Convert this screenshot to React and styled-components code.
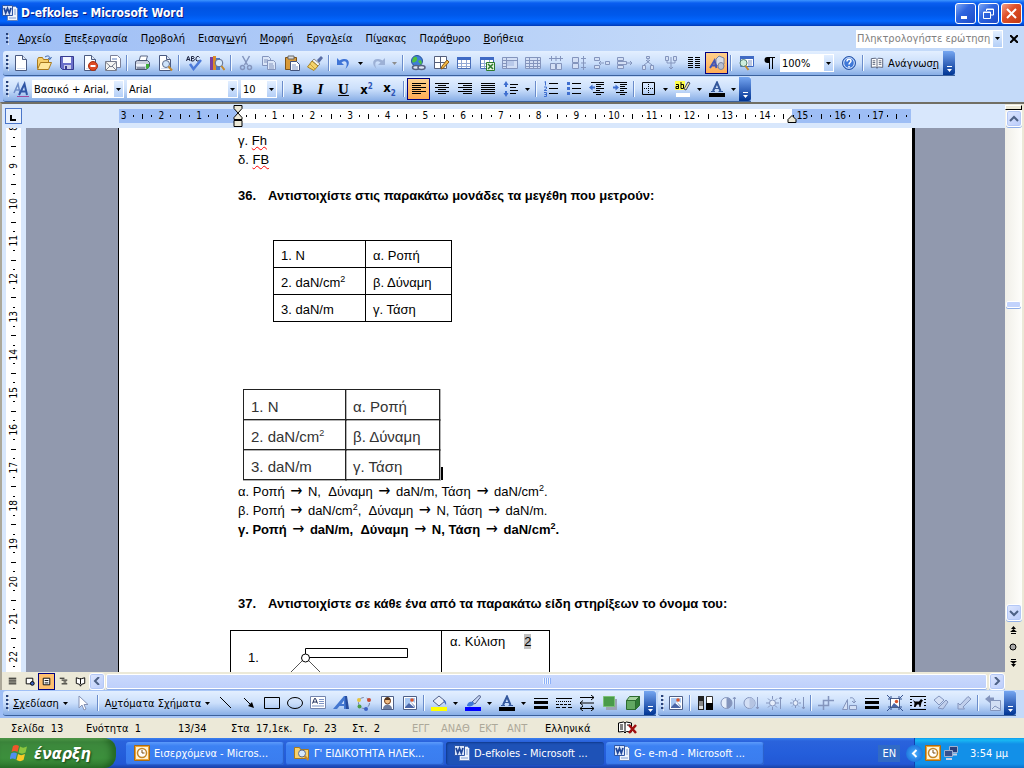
import React from 'react';
import styled, { createGlobalStyle, css } from 'styled-components';

const GlobalStyle = createGlobalStyle`
  * {
    box-sizing: border-box;
  }
  body {
    margin: 0;
    overflow: hidden;
    font-family: 'DejaVu Sans Condensed', 'DejaVu Sans', sans-serif;
    font-size: 11px;
    color: #000;
  }
  button, input, select {
    font: inherit;
    color: inherit;
    border: 0;
    padding: 0;
    margin: 0;
    background: none;
  }
  svg {
    display: block;
    flex: none;
  }
`;

const paper = (
  <>
    <path d="M2.500.5h7l4 4v11h-11z" fill="#fff" stroke="#4a5a80" />
    <path d="M9.500.5v4h4" fill="#dfe7f5" stroke="#4a5a80" />
    <path d="M4 13h8v1H4z" fill="#d5def0" />
  </>
);
const photo = (
  <>
    <path d="M1.500 1.500h13v13h-13z" fill="#fff" stroke="#4d5f87" />
    <path d="M3 3h10v5l-3-2-7 6z" fill="#a9c8f2" />
    <path d="M3 12l4-4 6 5H3z" fill="#4a66a8" />
    <path d="M8 6l5 5v2z" fill="#7f97c8" />
    <circle cx="10" cy="5" r="1.800" fill="#d9542b" />
  </>
);
const wordLogo = (
  <>
    <path d="M5.500 1.500h8l2 2v12h-10z" fill="#eef3fb" stroke="#5f7fbd" />
    <path d="M12 5h2M12 7h2M12 9h2M7 13h7" stroke="#7d9bd0" />
    <path d="M.5.5h10v10H.5z" fill="#dbe6fa" stroke="#2d55a5" />
    <path d="M2 3l1.700 5L5.500 3.500 7.300 8 9 3" fill="none" stroke="#1f4699" strokeWidth="1.800" />
  </>
);
const letterA = (
  <>
    <path d="M4 10L8 1.500 11.500 10" fill="none" stroke="#34589c" strokeWidth="2" />
    <path d="M5 7.500h6M2 10.500h4M9.500 10.500H14" stroke="#34589c" />
  </>
);
const tableGrid = (stroke, top) => (
  <>
    <path d="M1.500 2.500h13v11h-13z" fill="#fff" stroke={stroke} />
    <path d="M1 2h14v3H1z" fill={top} />
    <path d="M1 8.500h14M1 11.500h14M5.500 5v9M10.500 5v9" stroke={stroke} opacity=".6" />
  </>
);
const G = '#8495bd';
const lines = (rows) => <path d={rows} stroke="#000" />;

const icons = {
  word: wordLogo,
  blank: paper,
  open: (
    <>
      <path d="M1.500 13.500v-9l1-2h4l1 2h5v3" fill="#f7cf6b" stroke="#a8791d" />
      <path d="M1.500 14.500l3-7h11l-3 7z" fill="#ffe69a" stroke="#a8791d" />
      <path d="M9 2c3-2 5-1 5 2m-2-1l2 1.500L15.500 2" fill="none" stroke="#3e67b0" />
    </>
  ),
  save: (
    <>
      <path d="M1.500 1.500h13v13h-11l-2-2z" fill="#6a6fc9" stroke="#363a8f" />
      <path d="M4 2h8v6H4z" fill="#f4f6ff" />
      <path d="M5 10h7v4H5z" fill="#c8cbe8" />
      <path d="M6 11h2v3H6z" fill="#363a8f" />
    </>
  ),
  permission: (
    <>
      {paper}
      <circle cx="11" cy="11" r="4.500" fill="#de4b25" stroke="#a52f10" />
      <path d="M8.500 11h5" stroke="#fff" strokeWidth="2" />
    </>
  ),
  mail: (
    <>
      <path d="M5.500.5h7l3 3v9h-10z" fill="#fff" stroke="#7b8199" />
      <path d="M.5 6.500h11v9H.5z" fill="#f5f5f2" stroke="#777c8c" />
      <path d="M.5 7l5.500 5 5.500-5M1 15l4-4m6 4l-4-4" fill="none" stroke="#777c8c" />
      <path d="M7 4h5" stroke="#5f7fbd" />
    </>
  ),
  print: (
    <>
      <path d="M5 6l1.500-5h7L12 6" fill="#fff" stroke="#5c6885" />
      <path d="M1.500 6.500l2-1h10l2 2v4l-3 3h-11z" fill="#c9cfde" stroke="#4b5672" />
      <path d="M2 9h10v2H2z" fill="#eef1f8" />
      <path d="M12 9h3v4l-3 1z" fill="#3fae38" />
      <path d="M3 13h8" stroke="#4b5672" />
    </>
  ),
  preview: (
    <>
      {paper}
      <circle cx="9" cy="9" r="3.500" fill="#cfe4fb" stroke="#5f6d8c" />
      <path d="M11.500 11.500l3.500 4" stroke="#c58a2c" strokeWidth="2" />
    </>
  ),
  spelling: (
    <>
      <path d="M.5 6L2 1.500h.5L4 6M1 4.500h2.500M5.500 6V1.500h2l.5 1-.5 1h-2m2 0l1 1-1 1.500h-2M13.500 2.500l-1-1H11L10 3v2l1 1h1.500l1-1" fill="none" stroke="#1c2340" />
      <path d="M4 9l3.500 5L15 5" fill="none" stroke="#4c7ad9" strokeWidth="2.500" />
    </>
  ),
  research: (
    <>
      <path d="M1 2h3v13H1z" fill="#7b3fa0" />
      <path d="M4 1h3v14H4z" fill="#d98e2b" />
      <path d="M7 3h4v12H7z" fill="#4a7ac9" />
      <circle cx="10" cy="8" r="3.800" fill="#d6e9fb" stroke="#5f6d8c" />
      <path d="M12.500 11l3 4" stroke="#c58a2c" strokeWidth="2" />
    </>
  ),
  cut: (
    <>
      <path d="M4.500 1l5 9M11.500 1l-5 9" stroke={G} strokeWidth="1.500" />
      <circle cx="4.500" cy="12.500" r="2" fill="none" stroke={G} strokeWidth="1.500" />
      <circle cx="11.500" cy="12.500" r="2" fill="none" stroke={G} strokeWidth="1.500" />
    </>
  ),
  copy: (
    <>
      <path d="M1.500 1.500h6l2 2v7h-8z" fill="#dbe6f8" stroke={G} />
      <path d="M6.500 5.500h6l2 2v7h-8z" fill="#dbe6f8" stroke={G} />
      <path d="M3 5h4M3 7h3M8 9h4M8 11h5M8 13h5" stroke={G} />
    </>
  ),
  paste: (
    <>
      <path d="M1.500 2.500h11v12h-11z" fill="#d99a38" stroke="#7d531a" />
      <path d="M4 1h6v3H4z" fill="#dcdcdc" stroke="#666" />
      <path d="M6.500 6.500h6l3 3v6h-9z" fill="#fff" stroke="#42527a" />
      <path d="M8 10h4M8 12h6M8 14h6" stroke="#7d93c4" />
    </>
  ),
  brush: (
    <>
      <path d="M10 5l4-4 2 2-4 5z" fill="#5a6ea5" />
      <path d="M7 4l6 5-2 2-6-5z" fill="#f1f1f1" stroke="#888" />
      <path d="M5 6l6 5-4 4.500L.5 12z" fill="#f5d36a" stroke="#a78325" />
      <path d="M3 9l5 5" stroke="#c9a13a" />
    </>
  ),
  undo: <path d="M1 3v7h7L5.500 7.500c4-3 7 0 4 6.500 7-7 2-13-6-8.500z" fill="#3f74d6" />,
  redo: <path d="M15 3v7H8l2.500-2.500c-4-3-7 0-4 6.500-7-7-2-13 6-8.500z" fill="#9db1d6" />,
  link: (
    <>
      <circle cx="7" cy="6" r="5.500" fill="#3f7fd6" stroke="#27539c" />
      <path d="M3 3c3-3 5 0 4 2S4 8 2 7zM8 6c3-2 5 0 3 4z" fill="#4fc23c" />
      <ellipse cx="6" cy="12.500" rx="3.500" ry="2" fill="#dfe6f5" stroke="#566282" strokeWidth="1.500" />
      <ellipse cx="11.500" cy="12.500" rx="3.500" ry="2" fill="#dfe6f5" stroke="#566282" strokeWidth="1.500" />
    </>
  ),
  drawTable: (
    <>
      <path d="M1.500 1.500h12v12h-12z" fill="#fff" stroke="#555f7c" />
      <path d="M1 7.500h13M7.500 1v13" stroke="#555f7c" />
      <path d="M8 14l1-3 5-6 2 2-5.500 6z" fill="#f0b643" stroke="#8c5a17" />
    </>
  ),
  table: tableGrid('#4a6fb8', '#3f6ac4'),
  excel: (
    <>
      {tableGrid('#4a6fb8', '#3f6ac4')}
      <path d="M7.500 7.500h8v8h-8z" fill="#e4f2df" stroke="#2d7a2d" />
      <path d="M9 9l5 5m0-5l-5 5" stroke="#2d7a2d" strokeWidth="1.500" />
    </>
  ),
  merge: (
    <>
      <path d="M.5 2.500h15v11H.5z" fill="#d3dff5" stroke={G} />
      <path d="M1 5.500h14M4.500 3v11M1 8.500h3M1 11.500h3" stroke={G} />
      <path d="M5 6h7v5H5z" fill="#b9c9e9" />
    </>
  ),
  split: (
    <>
      <path d="M.5 2.500h15v11H.5z" fill="#d3dff5" stroke={G} />
      <path d="M1 5.500h14M4.500 3v11M8.500 5v9M12.500 3v11M1 8.500h14M1 11.500h14" stroke={G} />
    </>
  ),
  spreadCols: (
    <>
      <path d="M1 3.500h14M3.500 1v5M12.500 1v5M8 1v5" stroke={G} />
      <path d="M2.500 8.500h5v6h-5zM8.500 8.500h5v6h-5z" fill="#d3dff5" stroke={G} />
    </>
  ),
  spreadRows: (
    <>
      <path d="M12.500 1v14M10 3.500h5M10 12.500h5M10 8h5" stroke={G} />
      <path d="M1.500 2.500h6v5h-6zM1.500 8.500h6v5h-6z" fill="#d3dff5" stroke={G} />
    </>
  ),
  insertCell: (
    <>
      <path d="M.5 2.500h5v3h-5zM.5 10.500h5v3h-5zM11.500 6.500h4v3h-4z" fill="#d3dff5" stroke={G} />
      <path d="M5 8h5M7 6L5 8l2 2" fill="none" stroke={G} />
    </>
  ),
  insertRow: (
    <>
      <path d="M.5 2.500h6v3h-6zM.5 10.500h6v3h-6zM.5 6.500h9v3h-9z" fill="#d3dff5" stroke={G} />
      <path d="M10 8h5M13 6l2 2-2 2" fill="none" stroke={G} />
    </>
  ),
  dropCell: (
    <>
      <path d="M2.500 10.500h3v4h-3zM10.500 10.500h3v4h-3z" fill="#d3dff5" stroke={G} />
      <path d="M8 1v6M6 5l2 2 2-2M4 10l4-3 4 3" fill="none" stroke={G} />
      <path d="M6.500 1.500h3v2h-3z" fill="#d3dff5" stroke={G} />
    </>
  ),
  dropCol: (
    <>
      <path d="M2.500 1.500h3v4h-3zM10.500 1.500h3v4h-3z" fill="#d3dff5" stroke={G} />
      <path d="M8 2v12M6 12l2 2 2-2M4 6v2h8V6" fill="none" stroke={G} />
    </>
  ),
  columns: lines('M2 2.500h5M9 2.500h5M2 4.500h5M9 4.500h5M2 6.500h5M9 6.500h5M2 8.500h5M9 8.500h5M2 10.500h5M9 10.500h5M2 12.500h5M9 12.500h5'),
  drawing: (
    <>
      <path d="M7 4l3-3 5 2v6l-3 3-5-2z" fill="#d8dce6" stroke="#7a849e" />
      <ellipse cx="12" cy="11" rx="3" ry="3.500" fill="#b8bfd0" stroke="#7a849e" />
      <path d="M1 13L5.500 5.500 7.500 13M3 10.500h5" fill="none" stroke="#4355b5" strokeWidth="2" />
    </>
  ),
  docMap: (
    <>
      <path d="M2.500 1.500h13v10h-13z" fill="#fff" stroke="#3f6ac4" />
      <path d="M2 1h14v3H2z" fill="#3f6ac4" />
      <path d="M10 6h4M10 8h4M10 10h4" stroke="#7d93c4" />
      <circle cx="5.500" cy="8" r="3.500" fill="#cfeedd" stroke="#53806f" />
      <path d="M7.500 11l3 4" stroke="#c58a2c" strokeWidth="2" />
    </>
  ),
  pilcrow: (
    <>
      <path d="M8 2H6.500a3 3 0 000 6H8z" />
      <path d="M8.500 2v12M11.500 2v12M7 2.500h7" stroke="#000" />
    </>
  ),
  help: (
    <>
      <circle cx="8" cy="8" r="6.500" fill="#3f78d8" stroke="#2a56a8" />
      <circle cx="8" cy="8" r="5.300" fill="none" stroke="#dbe8fc" />
      <path d="M6 6.500c0-3 4-3 4-.5C10 7.500 8 7.500 8 9.500M8 11v1.500" fill="none" stroke="#fff" strokeWidth="1.500" />
    </>
  ),
  book: (
    <>
      <path d="M1.500 3l5-.5L8 4l1.500-1.500 5 .5v10l-5-.5L8 14l-1.500-1.500-5 .5z" fill="#fff" stroke="#4d566f" />
      <path d="M8 4v10M3 5.500h3M3 7.500h3M3 9.500h3M10 5.500h3M10 7.500h3M10 9.500h3" stroke="#4d566f" />
    </>
  ),
  styles: (
    <>
      <path d="M1 12L5 3l2 9M2.500 9H7" fill="none" stroke="#6f8ec9" strokeWidth="1.500" />
      <path d="M6 14L11.500 3 14 14M8 10.500h5" fill="none" stroke="#2f55a5" strokeWidth="2" />
      <path d="M4 15.500h12" stroke="#a04a9a" />
    </>
  ),
  left: lines('M1 2.500h14M1 4.500h9M1 6.500h14M1 8.500h9M1 10.500h14M1 12.500h9'),
  center: lines('M1 2.500h14M4 4.500h8M1 6.500h14M4 8.500h8M1 10.500h14M4 12.500h8'),
  right: lines('M1 2.500h14M6 4.500h9M1 6.500h14M6 8.500h9M1 10.500h14M6 12.500h9'),
  justify: lines('M1 2.500h14M1 4.500h14M1 6.500h14M1 8.500h14M1 10.500h14M1 12.500h14'),
  spacing: (
    <>
      {lines('M7 3.500h8M7 6.500h6M7 9.500h8M7 12.500h6')}
      <path d="M3 0L.5 4h5zM3 16L.5 12h5zM2 4h2v2H2zM2 10h2v2H2z" fill="#3f6fd0" />
    </>
  ),
  numbers: (
    <>
      {lines('M6 2.500h9M6 7.500h9M6 12.500h9')}
      <path d="M1.500 1l1-.500v4M1 6h2.500v1.500L1 9.500h3M1 11.500h2.500v4H1M1.500 13.500h2" fill="none" stroke="#3f6fd0" />
    </>
  ),
  bullets: (
    <>
      {lines('M6 2.500h9M6 7.500h9M6 12.500h9')}
      <path d="M1 1h3v3H1zM1 6h3v3H1zM1 11h3v3H1z" fill="#3f6fd0" />
    </>
  ),
  outdent: (
    <>
      {lines('M2 1.500h13M7 3.500h8M7 5.500h5M7 7.500h8M7 9.500h4M4 11.500h11M7 13.500h5')}
      <path d="M0 6.500l3.500-3v2H6v2H3.500v2z" fill="#3f6fd0" />
    </>
  ),
  indent: (
    <>
      {lines('M2 1.500h13M8 3.500h7M8 5.500h5M8 7.500h7M8 9.500h4M4 11.500h11M8 13.500h5')}
      <path d="M7 6.500l-3.500-3v2H1v2h2.500v2z" fill="#3f6fd0" />
    </>
  ),
  border: (
    <>
      <path d="M1.500 1.500h12v12h-12z" fill="none" stroke="#000" />
      <path d="M7.500 3v10M3 7.500h10" stroke="#000" strokeDasharray="1 1" />
    </>
  ),
  highlight: (
    <>
      <path d="M0 0h10v9H0z" fill="#ffff4a" />
      <path d="M1 3.500h2.500v4H1V5.500h2.500M6 1v6.500h2.500v-4H6" fill="none" stroke="#000" />
      <path d="M9 8l4-7 2 1-4 7z" fill="#f3e9a8" stroke="#404a66" />
      <path d="M1 12h14v4H1z" fill="#fff" />
    </>
  ),
  fontColor: (
    <>
      {letterA}
      <path d="M0 12h16v4H0z" />
    </>
  ),
  pointer: <path d="M4 1v12l3-3 2 5 2-1-2-4.500h4z" fill="#fff" stroke="#8592b5" />,
  line: <path d="M2 2l11 11" stroke="#000" />,
  arrow: (
    <>
      <path d="M3 3l8 8" stroke="#000" />
      <path d="M13 13l-6-2 4-4z" />
    </>
  ),
  rect: <path d="M.5 2.500h15v11H.5z" fill="none" stroke="#000" />,
  oval: <ellipse cx="8" cy="8" rx="7.500" ry="5.500" fill="none" stroke="#000" />,
  textBox: (
    <>
      <path d="M.5 1.500h15v12H.5z" fill="#fff" stroke="#7384ac" />
      <path d="M2.500 8.500l2-5h1l2 5M3 7h4" fill="none" stroke="#1c2a55" />
      <path d="M9 4.500h5M9 6.500h5M9 8.500h5M2 11h12" stroke="#7d93c4" />
    </>
  ),
  wordArt: (
    <>
      <path d="M11 1h3l2 13h-4z" fill="#274d9f" />
      <path d="M11 1L0 14h4l2.500-3H11v3h2l-1-13zM8.500 9L11 5.500V9z" fill="#4377d0" />
    </>
  ),
  diagram: (
    <>
      <circle cx="8" cy="8" r="5.500" fill="none" stroke="#7884a4" strokeDasharray="4 3" />
      <circle cx="3" cy="5" r="2" fill="#e7c440" />
      <circle cx="13" cy="5" r="2" fill="#c84b33" />
      <circle cx="3.500" cy="11.500" r="2" fill="#4c9e45" />
      <circle cx="10" cy="14" r="2" fill="#3d63c5" />
    </>
  ),
  clipArt: (
    <>
      <path d="M2.500 1.500h12v13h-12z" fill="#fff" stroke="#4d5f87" />
      <path d="M4 14c0-6 9-6 9 0z" fill="#6d7da0" />
      <circle cx="8.500" cy="6" r="3" fill="#f1bd84" stroke="#77411c" />
      <path d="M5.500 5c0-4 6-4 6 0z" fill="#55351d" />
    </>
  ),
  photo,
  fill: (
    <>
      <path d="M2 6l6-5 6 5-6 5z" fill="#e9eef8" stroke="#50608a" />
      <path d="M12 5c3 0 3.500 3 3 5l-2-3z" fill="#4169c2" />
      <path d="M0 12h16v4H0z" fill="#ff0" />
    </>
  ),
  lineColor: (
    <>
      <path d="M7 7l7-6.500 2 1L10 9z" fill="#c9d8f5" stroke="#50608a" />
      <path d="M2 11c0-4 4-5 6-4l1 2c-1 2-4 3-7 2z" fill="#3f78d8" />
      <path d="M0 12h16v4H0z" fill="#00f" />
    </>
  ),
  lineStyle: (
    <>
      <path d="M1 3h14v1H1zM1 6h14v3H1zM1 11h14v3H1z" />
    </>
  ),
  dashStyle: (
    <>
      <path d="M0 3.500h16" stroke="#000" />
      <path d="M0 6.500h16" stroke="#000" strokeDasharray="1 1" />
      <path d="M0 9.500h16" stroke="#000" strokeDasharray="3 1" />
      <path d="M0 12.500h16" stroke="#000" strokeDasharray="4 2" />
    </>
  ),
  arrowStyle: (
    <path d="M1 2.500h14M12 0l3 2.500L12 5M1 8h14M4 5.500L1 8l3 2.500M1 13.500h14M4 11l-3 2.500L4 16M12 11l3 2.500-3 2.500" fill="none" stroke="#000" />
  ),
  shadow: (
    <>
      <path d="M4 4h11v11H4z" fill="#9ba4b5" />
      <path d="M1.500 1.500h11v10h-11z" fill="#4a9b4a" stroke="#7bbf78" />
    </>
  ),
  cube: (
    <>
      <path d="M1.500 5.500h9v9h-9z" fill="#62a862" stroke="#2c6b30" />
      <path d="M1.500 5.500l3-4h10l-4 4z" fill="#a5d3a0" stroke="#2c6b30" />
      <path d="M10.500 5.500l4-4v9l-4 4z" fill="#2f7a36" stroke="#2c6b30" />
    </>
  ),
  colorMode: (
    <>
      <path d="M1 1h6v14H1z" fill="#222" />
      <path d="M2 11h4v3H2z" fill="#ddd" />
      <path d="M2 6h4v5H2z" fill="#888" />
      <path d="M9.500 1.500h6v13h-6z" fill="#fff" stroke="#333" />
      <path d="M9 8h7v7H9z" />
    </>
  ),
  contrastUp: (
    <>
      <circle cx="6.500" cy="8" r="5.500" fill="#e6eefb" stroke={G} />
      <path d="M6.500 2.500a5.500 5.500 0 010 11z" fill={G} />
      <path d="M14.500 14V2M13 4l1.500-2L16 4" fill="none" stroke={G} />
    </>
  ),
  contrastDown: (
    <>
      <circle cx="6.500" cy="8" r="5.500" fill="#d3dff5" stroke={G} />
      <path d="M6.500 2.500a5.500 5.500 0 010 11z" fill="#b5c4e2" />
      <path d="M14.500 2v12M13 12l1.500 2 1.500-2" fill="none" stroke={G} />
    </>
  ),
  brightUp: (
    <>
      <circle cx="6.500" cy="8" r="3" fill="#e6eefb" stroke={G} />
      <path d="M6.500 1v3M6.500 12v3M0 8h3M10 8h3M2 3.500l2 2M9 10.500l2 2M11 3.500l-2 2M2 12.500l2-2M14.500 14V2M13 4l1.500-2L16 4" fill="none" stroke={G} />
    </>
  ),
  brightDown: (
    <>
      <circle cx="6.500" cy="8" r="2.500" fill="#e6eefb" stroke={G} />
      <path d="M6.500 3v2M6.500 11v2M1 8h2M10 8h2M3 4.500l1 1M9 10.500l1 1M10 4.500l-1 1M3 11.500l1-1M14.500 2v12M13 12l1.500 2 1.500-2" fill="none" stroke={G} />
    </>
  ),
  crop: (
    <path d="M0 10.500h10.500V5M5.500 15V5.500H16M10.500 5V1" fill="none" stroke={G} strokeWidth="1.500" />
  ),
  rotate: (
    <>
      <path d="M1.500 14.500l5-10v10zM8.500 14.500v-4h7v4z" fill="#d3dff5" stroke={G} />
      <path d="M9 3c3-1 5 1 4 4m-2-1l2 2 2-2" fill="none" stroke={G} />
    </>
  ),
  compress: (
    <>
      <path d="M3.500 3.500h9v9h-9z" fill="#fff" stroke="#4d5f87" />
      <path d="M4 12l3-4 5 4z" fill="#4a66a8" />
      <circle cx="9.500" cy="6.500" r="1.700" fill="#d9542b" />
      <path d="M0 0l4 4M16 0l-4 4M0 16l4-4M16 16l-4-4M1 4h3V1M15 4h-3V1M1 12h3v3M15 12h-3v3" fill="none" stroke="#35528f" />
    </>
  ),
  wrap: (
    <>
      <path d="M0 1.500h16M0 4.500h16M0 7.500h16M0 10.500h16M0 14.500h16" stroke="#000" />
      <path d="M2 3h12v10H2z" fill="#cfe0fb" />
      <path d="M3 5l2 1.500h4L11 4l2 1.500-1.500 2-1 4.500H9.500L9 9.500H7L5.500 12H4l.5-4z" />
    </>
  ),
  formatFill: (
    <>
      <path d="M1 5l5-4 5 4-5 5z" fill="#d3dff5" stroke={G} />
      <path d="M5 13l8-8 2 2-5 7z" fill="#c0cfec" stroke={G} />
    </>
  ),
  transparent: <path d="M2 14v-6l2 2 8-8.500 3 2.500-8 8 1.500 2z" fill="#c0cfec" stroke={G} />,
  reset: (
    <>
      <path d="M5.500 5.500h10v10h-10z" fill="#d3dff5" stroke={G} />
      <path d="M7 14l3-3 5 3" fill="none" stroke={G} />
      <path d="M0 4l5-4v2.500h4V6H5v2z" fill={G} />
    </>
  ),
  clock: (
    <>
      <path d="M.5.5h15v15H.5z" fill="#f0a534" stroke="#a86a12" />
      <path d="M2 2h12v12H2z" fill="#fff3d4" />
      <circle cx="8" cy="8" r="4.500" fill="#fff" stroke="#c2862a" strokeWidth="1.500" />
      <path d="M8 5v3h2.500" fill="none" stroke="#7b4c10" />
    </>
  ),
  folderFind: (
    <>
      <path d="M.5 2.500h5l1 2h8v9H.5z" fill="#f8d26b" stroke="#a8791d" />
      <circle cx="8" cy="8.500" r="3.500" fill="#d6e9fb" stroke="#5f6d8c" />
      <path d="M10.500 11l4 4" stroke="#c58a2c" strokeWidth="2" />
    </>
  ),
  network: (
    <>
      <path d="M6.500 1.500h8v6h-8z" fill="#2b3f7c" stroke="#9fb0d0" />
      <path d="M9 9.500h5" stroke="#c5d0e6" strokeWidth="2" />
      <path d="M1.500 5.500h8v6h-8z" fill="#35508f" stroke="#9fb0d0" />
      <path d="M3 14h6" stroke="#c5d0e6" strokeWidth="2" />
    </>
  ),
  viewNormal: lines('M4 4.500h8M4 6.500h8M4 8.500h8M4 10.500h8'),
  viewWeb: (
    <>
      <path d="M4.500 4.500h7v6h-7z" fill="#fff" stroke="#000" />
      <circle cx="11" cy="10" r="2" fill="#3d63c5" stroke="#000" />
    </>
  ),
  viewPrint: (
    <>
      <path d="M4.500 4.500h7v7h-7z" fill="#fff" stroke="#000" />
      <path d="M6 7h4M6 9.500h4" stroke="#000" />
    </>
  ),
  viewOutline: lines('M4 4.500h5M6 6.500h6M8 8.500h3M6 10.500h6'),
  viewRead: (
    <>
      <path d="M3.500 4l3.500 1h2l3.500-1v6L9 11l-1 2-1-2-3.500-1z" fill="#fff" stroke="#000" />
      <path d="M8 5v6" stroke="#000" />
    </>
  ),
};

const Icon = ({ name, size = 16 }) => (
  <svg width={size} height={size} viewBox="0 0 16 16" aria-hidden="true">
    {icons[name]}
  </svg>
);

const Caret = ({ color = '#000' }) => (
  <svg width="5" height="3" viewBox="0 0 5 3" aria-hidden="true">
    <path d="M0 0h5L2.500 3z" fill={color} />
  </svg>
);

const chevrons = {
  up: 'M1 6l4-4 4 4',
  down: 'M1 2l4 4 4-4',
  left: 'M7 0L3 4l4 4',
  right: 'M3 0l4 4-4 4',
};
const Chevron = ({ dir }) => (
  <svg width="10" height="8" viewBox="0 0 10 8" aria-hidden="true">
    <path d={chevrons[dir]} fill="none" stroke="#4d6185" strokeWidth="2" />
  </svg>
);

const Window = styled.div`
  height: 100vh;
  display: flex;
  flex-direction: column;
  background: #c4daf9;
`;

const TitleBar = styled.header`
  height: 26px;
  flex: none;
  display: flex;
  align-items: center;
  gap: 3px;
  padding: 0 2px;
  background: linear-gradient(#3d95ff 0, #0a5ef0 3px, #0054e3 8px, #0059ec 15px, #0266ff 21px, #0050dd 24px, #0038b4 26px);
`;

const Title = styled.h1`
  flex: 1;
  margin: 0;
  font: bold 12px 'DejaVu Sans Condensed', sans-serif;
  color: #fff;
  text-shadow: 1px 1px 0 #0a1883;
`;

const CaptionButton = styled.button`
  width: 21px;
  height: 21px;
  display: flex;
  align-items: center;
  justify-content: center;
  border: 1px solid #fff;
  border-radius: 3px;
  background: ${({ $close }) =>
    $close
      ? 'linear-gradient(135deg, #f0a08a, #e0502a 40%, #c23a12)'
      : 'linear-gradient(135deg, #7ea8f5, #2f66e0 40%, #1c4bc8)'};
  margin-left: -1px;
`;

const MenuBar = styled.nav`
  height: 25px;
  flex: none;
  display: flex;
  align-items: center;
  padding: 0 4px 0 6px;
  background: linear-gradient(90deg, #9ebef5, #c4daf9 70%);
`;

const Menus = styled.div`
  display: flex;
  gap: 13px;
  padding-left: 9px;
`;

const MenuButton = styled.button`
  height: 20px;
  white-space: nowrap;
`;

const Handle = styled.span`
  flex: none;
  width: 3px;
  height: ${({ $short }) => ($short ? 12 : 16)}px;
  background: repeating-linear-gradient(#27417a 0 2px, transparent 2px 4px);
  border-right: 1px solid rgba(255, 255, 255, 0.6);
`;

const Ask = styled.div`
  display: flex;
  height: 18px;
  margin-left: auto;
  background: #fff;

  input {
    width: 136px;
    padding: 0 0 0 1px;
    outline: 0;
    &::placeholder {
      color: #808080;
      opacity: 1;
    }
  }
`;

const DropArrow = styled.button`
  width: 11px;
  height: 100%;
  display: flex;
  align-items: center;
  justify-content: center;
  ${({ $filled }) =>
    $filled &&
    css`
      background: linear-gradient(#e3efff, #b4cff7);
      border: 1px solid #fff;
    `}
`;

const CloseDoc = styled.button`
  width: 12px;
  height: 16px;
  display: flex;
  align-items: center;
  justify-content: center;
  margin-left: 5px;
`;

const Dock = styled.div`
  flex: none;
  display: flex;
  align-items: flex-start;
  gap: 2px;
  padding: ${({ $pad }) => $pad || '0'};
  padding-left: 3px;
  background: linear-gradient(90deg, #9ebef5, #c4daf9 70%);
`;

const Bar = styled.div`
  height: 25px;
  display: flex;
  align-items: center;
  padding-left: 3px;
  border-bottom: 1px solid #3b619c;
  border-radius: 3px 0 0 3px;
  background: linear-gradient(#e3efff, #cbdffb 50%, #88aee6);
`;

const BarEnd = styled.button`
  align-self: stretch;
  width: 12px;
  display: flex;
  align-items: flex-end;
  justify-content: center;
  padding-bottom: 2px;
  border-radius: 0 3px 3px 0;
  background: linear-gradient(#75a6f1, #3a6ac0 50%, #003594);
`;

const Tool = styled.button`
  flex: none;
  width: 23px;
  height: 22px;
  display: flex;
  align-items: center;
  justify-content: center;
  ${({ $active }) =>
    $active &&
    css`
      border: 1px solid #000080;
      background: linear-gradient(#ffd08c, #ffac55);
    `}
`;

const FaceTool = styled(Tool)`
  font: bold 15px 'Liberation Serif', serif;
  font-style: ${({ $italic }) => ($italic ? 'italic' : 'normal')};
  text-decoration: ${({ $underline }) => ($underline ? 'underline' : 'none')};
`;

const ScriptTool = styled(Tool)`
  font: bold 13px 'DejaVu Sans Condensed', sans-serif;

  sup, sub {
    font-size: 8px;
    line-height: 8px;
    color: #2f55b5;
  }
`;

const TextTool = styled.button`
  flex: none;
  height: 22px;
  display: flex;
  align-items: center;
  gap: 4px;
  padding: 0 4px;
  white-space: nowrap;
`;

const Separator = styled.span`
  flex: none;
  width: 2px;
  height: 16px;
  margin: 0 2px;
  border-left: 1px solid #6a8ccb;
  border-right: 1px solid #f1f9ff;
`;

const ComboBox = styled.span`
  flex: none;
  display: flex;
  width: ${({ $width }) => $width}px;
  height: 18px;
  margin-right: 3px;
  background: #fff;

  select {
    flex: 1;
    min-width: 0;
    appearance: none;
    padding-left: 2px;
    outline: 0;
  }
`;

const WorkArea = styled.main`
  flex: 1;
  min-height: 0;
  display: flex;
  background: #d8e7fc;
  border-top: 2px solid #716f64;
  border-left: 2px solid #aca899;
`;

const Sheet = styled.section`
  flex: 1;
  min-width: 0;
  display: flex;
  flex-direction: column;
`;

const RulerRow = styled.div`
  flex: none;
  height: 24px;
  display: flex;
  align-items: center;
`;

const TabButton = styled.button`
  width: 17px;
  height: 16px;
  margin: 0 97px 0 3px;
  padding: 3px 0 0 4px;
  border: 1px solid #4a76c9;
  background: #e8f1fd;
`;

const Ruler = styled.div`
  position: relative;
  flex: 1;
  height: 14px;
  margin-right: 94px;
  display: grid;
  grid-template-columns: repeat(84, 1fr);
  align-items: center;
  justify-items: center;
  font-size: 10px;
  line-height: 12px;
  background: linear-gradient(90deg, #9ebef5 15%, #fff 15% 85%, #9ebef5 85%);

  span {
    width: 0;
    display: flex;
    justify-content: center;
  }
`;

const Tick = styled.i`
  flex: none;
  width: ${({ $wide }) => $wide || 1}px;
  height: ${({ $tall }) => $tall || 2}px;
  background: #000;
`;

const Marker = styled.svg`
  position: absolute;
  left: ${({ $at }) => $at};
  top: ${({ $top }) => $top}px;
  margin-left: -5px;
`;

const Canvas = styled.div`
  flex: 1;
  min-height: 0;
  display: flex;
  background: #9199ae;
`;

const SideRuler = styled.div`
  flex: none;
  width: 24px;
  overflow: hidden;
  border: solid #d8e7fc;
  border-width: 0 5px 0 4px;
  background: #fff;
`;

const SideTicks = styled.div`
  height: 567px;
  margin-top: -5px;
  display: grid;
  grid-template-rows: repeat(60, 1fr);
  align-items: center;
  justify-items: center;
  font-size: 10px;
  line-height: 12px;

  span {
    height: 0;
    display: flex;
    align-items: center;
  }
  b {
    font-weight: normal;
    writing-mode: vertical-rl;
    transform: rotate(180deg);
  }
`;

const Page = styled.article`
  flex: 1;
  overflow: hidden;
  margin: 0 90px 0 92px;
  padding: 3px 0 0 119px;
  border: solid #000;
  border-width: 0 3px 0 1px;
  background: #fff;
  font: 13px/19px 'Liberation Sans', Arial, sans-serif;

  sup {
    font-size: 9px;
    line-height: 9px;
  }
`;

const Line = styled.p`
  height: 19px;
  margin: 0;
  white-space: pre;
  font-weight: ${({ $bold }) => ($bold ? 'bold' : 'normal')};
`;

const Arrow = styled.span`
  padding: 0 2px;
  font: 16px/15px 'DejaVu Sans Condensed', sans-serif;
`;

const Misspelt = styled.span`
  text-decoration: underline wavy #f00 1px;
  text-underline-offset: 1px;
`;

const Heading = styled.h2`
  display: flex;
  margin: ${({ $gap }) => $gap}px 0 0;
  font: bold 13px/19px 'Liberation Sans', Arial, sans-serif;

  span {
    width: 30px;
  }
`;

const UnitTable = styled.table`
  border-collapse: collapse;
  margin: 35px 0 0 35px;

  td {
    height: 27px;
    padding: 3px 7px 0;
    line-height: 19px;
    border: 1px solid #000;
  }
  td:first-child {
    width: 92px;
  }
  td:last-child {
    width: 86px;
  }
`;

const PastedTable = styled(UnitTable)`
  margin: 0 0 0 5px;
  font-size: 15px;
  color: #333;

  td {
    height: 30px;
    border: 1px solid #222;
    box-shadow: 0 0 0 1px rgba(0, 0, 0, 0.3);
  }
  td:first-child {
    width: 102px;
  }
  td:last-child {
    width: 94px;
  }
`;

const PastedRow = styled.div`
  display: flex;
  align-items: flex-end;
  gap: 1px;
  margin: 67px 0 2px;
`;

const TextCaret = styled.span`
  width: 2px;
  height: 13px;
  background: #000;
`;

const SupportTable = styled.table`
  border-collapse: collapse;
  margin: 17px 0 0 -8px;

  td {
    height: 120px;
    padding: 1px 8px;
    vertical-align: top;
    border: 1px solid #000;
  }
  td:first-child {
    width: 211px;
    padding: 17px 17px;
  }
  td:last-child {
    width: 108px;
  }
`;

const Support = styled.div`
  display: flex;
  gap: 30px;
`;

const Field = styled.mark`
  margin-left: 19px;
  background: #c0c0c0;
`;

const ScrollColumn = styled.div`
  flex: none;
  width: 19px;
  display: flex;
  flex-direction: column;
  align-items: flex-start;
  padding-top: 1px;
  background: #ece9d8;
`;

const SplitBox = styled.div`
  width: 17px;
  height: 5px;
  border: 1px solid #fff;
  border-right-color: #000;
  border-bottom-color: #000;
  background: #ece9d8;
`;

const Track = styled.div`
  flex: 1;
  display: flex;
  flex-direction: column;
  align-items: center;
  width: 17px;
  background: linear-gradient(90deg, #f0efe8, #fefefb);
`;

const Gap = styled.span`
  flex: ${({ $share }) => $share};
`;

const ScrollButton = styled.button`
  flex: none;
  width: 16px;
  height: 17px;
  display: flex;
  align-items: center;
  justify-content: center;
  border: 1px solid #fff;
  border-radius: 3px;
  box-shadow: inset 0 0 0 1px #b4c8f6, 0 1px 0 #8faee8;
  background: linear-gradient(135deg, #dfe8ff, #b9cbfa);
`;

const Thumb = styled.div`
  width: 15px;
  height: 7px;
  border: 1px solid #fff;
  border-radius: 2px;
  background: #c2d3fc;
  box-shadow: 0 1px 0 #8faee8;
`;

const Browse = styled.div`
  width: 16px;
  height: 69px;
  display: flex;
  flex-direction: column;
  align-items: center;
  gap: 8px;
  padding-top: 5px;
`;

const BottomScroll = styled.div`
  flex: none;
  height: 18px;
  display: flex;
  align-items: center;
  padding-left: 2px;
  background: #ece9d8;
`;

const ViewButton = styled.button`
  width: 17px;
  height: 17px;
  display: flex;
  align-items: center;
  justify-content: center;
  ${({ $active }) =>
    $active &&
    css`
      border: 1px solid #000080;
      background: #ffc06f;
    `}
`;

const WideThumb = styled.div`
  flex: 1;
  height: 15px;
  display: flex;
  align-items: center;
  justify-content: center;
  margin: 0 2px 0 1px;
  border: 1px solid #fff;
  border-radius: 2px;
  background: linear-gradient(#cad9fd, #bed0fb);
  box-shadow: 0 1px 0 #8faee8;

  i {
    width: 8px;
    height: 6px;
    background: repeating-linear-gradient(90deg, #eef4fe 0 1px, #8cb0f8 1px 2px);
  }
`;

const StatusBar = styled.footer`
  flex: none;
  height: 20px;
  display: grid;
  grid-template-columns: 75px 92px 53px 72px 49px 60px 29px 38px 28px 38px 72px 1fr;
  align-items: center;
  padding-left: 11px;
  white-space: pre;
  background: #ece9d8;
`;

const Dim = styled.span`
  color: #aca899;
`;

const TaskBar = styled.nav`
  flex: none;
  height: 30px;
  display: flex;
  align-items: center;
  gap: 2px;
  background: linear-gradient(#3a80f0 0, #2a63dc 3px, #245edb 15px, #2258d5 26px, #1941a5 30px);
`;

const StartButton = styled.button`
  width: 116px;
  height: 30px;
  display: flex;
  align-items: center;
  gap: 5px;
  padding-left: 10px;
  margin-right: 8px;
  border-radius: 0 12px 12px 0;
  background: linear-gradient(#5eac56 0, #3c873c 4px, #3c8f3c 20px, #2f7a2f 30px);
  box-shadow: inset -5px 0 6px rgba(0, 50, 0, 0.4);
  color: #fff;
  font: italic bold 16px 'DejaVu Sans Condensed', sans-serif;
  text-shadow: 1px 1px 2px #153f15;
`;

const Task = styled.button`
  flex: 0 1 158px;
  min-width: 0;
  height: 23px;
  display: flex;
  align-items: center;
  gap: 4px;
  padding: 0 12px 0 8px;
  border-radius: 3px;
  color: #fff;
  background: ${({ $active }) => ($active ? '#1e52b7' : 'linear-gradient(#5c9bfb, #3c81f3 4px, #3a7cee)')};
  box-shadow: inset ${({ $active }) => ($active ? '1px 1px 2px #0f3a8c' : '-1px -1px 1px #2a5fc8')};

  span {
    overflow: hidden;
    text-overflow: ellipsis;
    white-space: nowrap;
  }
`;

const Language = styled.button`
  height: 17px;
  margin: 0 12px 0 auto;
  padding: 0 4px;
  color: #fff;
  background: #316ac5;
`;

const Tray = styled.div`
  height: 30px;
  display: flex;
  align-items: center;
  gap: 2px;
  padding-right: 16px;
  color: #fff;
  border-left: 1px solid #1042af;
  background: linear-gradient(#0c9bf0 0, #19b9f3 2px, #1290e8 6px, #1290e8 26px, #0d6fc8 30px);

  time {
    margin-left: 9px;
  }
`;

const TrayToggle = styled.button`
  width: 17px;
  height: 17px;
  display: flex;
  align-items: center;
  justify-content: center;
  margin-left: -9px;
  border-radius: 50%;
  background: radial-gradient(#4ab0ff, #0d5fd0);
`;

const menus = [
  ['', 'Α', 'ρχείο'],
  ['', 'Ε', 'πεξεργασία'],
  ['Π', 'ρ', 'οβολή'],
  ['Εισαγ', 'ω', 'γή'],
  ['', 'Μ', 'ορφή'],
  ['Εργα', 'λ', 'εία'],
  ['Πί', 'ν', 'ακας'],
  ['Παρά', 'θ', 'υρο'],
  ['', 'Β', 'οήθεια'],
];

const standardTools = [
  'blank', 'open', 'save', 'permission', 'mail', '|',
  'print', 'preview', '|',
  'spelling', 'research', '|',
  'cut', 'copy', 'paste', 'brush', '|',
  'undo+', 'redo-', '|',
  'link', 'drawTable', 'table', 'excel', 'merge', 'split', 'spreadCols', 'spreadRows',
  'insertCell', 'insertRow', 'dropCell', 'dropCol', 'columns', 'drawing!', '|',
  'docMap', 'pilcrow',
];
const paragraphTools = [
  '|', 'left!', 'center', 'right', 'justify', 'spacing+', '|',
  'numbers', 'bullets', 'outdent', 'indent', '|',
  'border+', 'highlight+', 'fontColor+',
];
const shapeTools = [
  'line', 'arrow', 'rect', 'oval', 'textBox', 'wordArt', 'diagram', 'clipArt', 'photo', '|',
  'fill+', 'lineColor+', 'fontColor+', 'lineStyle', 'dashStyle', 'arrowStyle', 'shadow', 'cube',
];
const pictureTools = [
  'photo', '|', 'colorMode', 'contrastUp', 'contrastDown', 'brightUp', 'brightDown', '|',
  'crop', 'rotate', 'lineStyle', 'compress', 'wrap', 'formatFill', 'transparent', '|', 'reset',
];

// suffixes: "+" has a drop arrow, "-" has a greyed drop arrow, "!" is pressed
function Tools({ items }) {
  return items.map((item, i) => {
    if (item === '|') return <Separator key={i} />;
    const name = item.replace(/[-+!]$/, '');
    return (
      <React.Fragment key={i}>
        <Tool $active={item.endsWith('!')} aria-label={name}>
          <Icon name={name} />
        </Tool>
        {/[-+]$/.test(item) && (
          <DropArrow aria-label={`${name} options`}>
            <Caret color={item.endsWith('-') ? '#8d8d8d' : '#000'} />
          </DropArrow>
        )}
      </React.Fragment>
    );
  });
}

function Combo({ label, width, value }) {
  return (
    <ComboBox $width={width}>
      <select aria-label={label} defaultValue={value}>
        <option>{value}</option>
      </select>
      <DropArrow $filled as="span">
        <Caret />
      </DropArrow>
    </ComboBox>
  );
}

function More() {
  return (
    <BarEnd aria-label="More buttons">
      <svg width="7" height="7" viewBox="0 0 7 7">
        <path d="M1 0h5v1H1zM1 3h5L3.500 6z" fill="#fff" />
      </svg>
    </BarEnd>
  );
}

function HorizontalRuler() {
  return (
    <Ruler>
      {Array.from({ length: 84 }, (_, i) => {
        const cm = Math.abs(i / 4 - 3);
        return (
          <span key={i}>
            {i % 4 === 0 ? cm || '' : <Tick $tall={i % 4 === 2 ? 5 : 2} />}
          </span>
        );
      })}
      <Marker $at="15%" $top={-4} width="10" height="22" viewBox="0 0 10 22">
        <path d="M1 .500h8v3L5 8 1 3.500zM5 8l4 4.500v2H1v-2zM1 15.500h8v6H1z" fill="#ece9d8" stroke="#000" />
      </Marker>
      <Marker $at="85%" $top={6} width="10" height="8" viewBox="0 0 10 8">
        <path d="M5 .5l4 4v3H1v-3z" fill="#ece9d8" stroke="#000" />
      </Marker>
    </Ruler>
  );
}

function VerticalRuler() {
  return (
    <SideRuler>
      <SideTicks>
        {Array.from({ length: 60 }, (_, i) => (
          <span key={i}>
            {i % 4 === 0 ? <b>{8 + i / 4}</b> : <Tick $wide={i % 4 === 2 ? 5 : 2} $tall={1} />}
          </span>
        ))}
      </SideTicks>
    </SideRuler>
  );
}

const UnitRows = () => (
  <tbody>
    <tr>
      <td>1. N</td>
      <td>α. Ροπή</td>
    </tr>
    <tr>
      <td>
        2. daN/cm<sup>2</sup>
      </td>
      <td>β. Δύναμη</td>
    </tr>
    <tr>
      <td>3. daN/m</td>
      <td>γ. Τάση</td>
    </tr>
  </tbody>
);

const To = () => <Arrow>→</Arrow>;

function Document() {
  return (
    <Page>
      <Line>
        γ. <Misspelt>Fh</Misspelt>
      </Line>
      <Line>
        δ. <Misspelt>FB</Misspelt>
      </Line>
      <Heading $gap={17}>
        <span>36.</span>Αντιστοιχίστε στις παρακάτω μονάδες τα μεγέθη που μετρούν:
      </Heading>
      <UnitTable>
        <UnitRows />
      </UnitTable>
      <PastedRow>
        <PastedTable>
          <UnitRows />
        </PastedTable>
        <TextCaret />
      </PastedRow>
      <Line>
        α. Ροπή <To /> N,{'  '}Δύναμη <To /> daN/m, Τάση <To /> daN/cm<sup>2</sup>.
      </Line>
      <Line>
        β. Ροπή <To /> daN/cm<sup>2</sup>,{'  '}Δύναμη <To /> N, Τάση <To /> daN/m.
      </Line>
      <Line $bold>
        γ. Ροπή <To /> daN/m,{'  '}Δύναμη <To /> N, Τάση <To /> daN/cm<sup>2</sup>.
      </Line>
      <Heading $gap={55}>
        <span>37.</span>Αντιστοιχίστε σε κάθε ένα από τα παρακάτω είδη στηρίξεων το όνομα του:
      </Heading>
      <SupportTable>
        <tbody>
          <tr>
            <td>
              <Support>
                <span>1.</span>
                <svg width="120" height="70" viewBox="0 0 120 70">
                  <path d="M16.500.5h102v9h-102z" fill="#fff" stroke="#000" />
                  <path d="M14 12L-14 40M19 12l28 28" stroke="#555" />
                  <circle cx="16.500" cy="10" r="4" fill="#fff" stroke="#000" />
                </svg>
              </Support>
            </td>
            <td>
              α. Κύλιση<Field>2</Field>
            </td>
          </tr>
        </tbody>
      </SupportTable>
    </Page>
  );
}

export default function App() {
  return (
    <Window>
      <GlobalStyle />
      <TitleBar>
        <Icon name="word" />
        <Title>D-efkoles - Microsoft Word</Title>
        <CaptionButton aria-label="Minimize">
          <svg width="11" height="11">
            <path d="M1 8h6v3H1z" fill="#fff" />
          </svg>
        </CaptionButton>
        <CaptionButton aria-label="Restore">
          <svg width="11" height="11">
            <path d="M3.500 3V1h7v6H8M.5 4h7v6.500h-7zM3 1.500h8M0 4.500h8" fill="none" stroke="#fff" />
          </svg>
        </CaptionButton>
        <CaptionButton $close aria-label="Close">
          <svg width="11" height="11">
            <path d="M1 1l9 9M10 1l-9 9" stroke="#fff" strokeWidth="2" />
          </svg>
        </CaptionButton>
      </TitleBar>

      <MenuBar>
        <Handle $short />
        <Menus>
          {menus.map(([before, key, after]) => (
            <MenuButton key={before + key + after}>
              {before}
              <u>{key}</u>
              {after}
            </MenuButton>
          ))}
        </Menus>
        <Ask>
          <input aria-label="Ερώτηση" placeholder="Πληκτρολογήστε ερώτηση" />
          <DropArrow $filled aria-label="Ερωτήσεις">
            <Caret />
          </DropArrow>
        </Ask>
        <CloseDoc aria-label="Close document">
          <svg width="8" height="8">
            <path d="M0 0l8 8M8 0L0 8" stroke="#000" strokeWidth="2" />
          </svg>
        </CloseDoc>
      </MenuBar>

      <Dock $pad="0 0 1px">
        <Bar>
          <Handle />
          <Tools items={standardTools} />
          <Combo label="Zoom" width={54} value="100%" />
          <Tools items={['help', '|']} />
          <TextTool>
            <Icon name="book" size={14} />
            <span>
              Ανάγνωσ<u>η</u>
            </span>
          </TextTool>
          <More />
        </Bar>
      </Dock>
      <Dock>
        <Bar>
          <Handle />
          <Tools items={['styles']} />
          <Combo label="Style" width={92} value="Βασικό + Arial," />
          <Combo label="Font" width={111} value="Arial" />
          <Combo label="Font size" width={36} value="10" />
          <Separator />
          <FaceTool>B</FaceTool>
          <FaceTool $italic>I</FaceTool>
          <FaceTool $underline>U</FaceTool>
          <ScriptTool aria-label="Superscript">
            <span>
              x<sup>2</sup>
            </span>
          </ScriptTool>
          <ScriptTool aria-label="Subscript">
            <span>
              x<sub>2</sub>
            </span>
          </ScriptTool>
          <Tools items={paragraphTools} />
          <More />
        </Bar>
      </Dock>

      <WorkArea>
        <Sheet>
          <RulerRow>
            <TabButton aria-label="Tab stop">
              <svg width="8" height="8">
                <path d="M1 1v5h5" fill="none" stroke="#000" strokeWidth="2" />
              </svg>
            </TabButton>
            <HorizontalRuler />
          </RulerRow>
          <Canvas>
            <VerticalRuler />
            <Document />
          </Canvas>
          <BottomScroll>
            {['viewNormal', 'viewWeb', 'viewPrint', 'viewOutline', 'viewRead'].map((name) => (
              <ViewButton key={name} $active={name === 'viewPrint'} aria-label={name}>
                <Icon name={name} size={15} />
              </ViewButton>
            ))}
            <ScrollButton aria-label="Scroll left">
              <Chevron dir="left" />
            </ScrollButton>
            <WideThumb>
              <i />
            </WideThumb>
            <ScrollButton aria-label="Scroll right">
              <Chevron dir="right" />
            </ScrollButton>
          </BottomScroll>
        </Sheet>
        <ScrollColumn>
          <SplitBox />
          <Track>
            <ScrollButton aria-label="Scroll up">
              <Chevron dir="up" />
            </ScrollButton>
            <Gap $share={37} />
            <Thumb />
            <Gap $share={63} />
            <ScrollButton aria-label="Scroll down">
              <Chevron dir="down" />
            </ScrollButton>
          </Track>
          <Browse>
            <svg width="7" height="9">
              <path d="M3.500 0L6 3H1zM3.500 3L7 6H0zM1 7h5v1H1z" />
            </svg>
            <svg width="8" height="8">
              <circle cx="4" cy="4" r="3" fill="#aaa" stroke="#000" />
            </svg>
            <svg width="7" height="9">
              <path d="M1 0h5v1H1zM0 2h7L3.500 5zM1 5h5L3.500 8z" />
            </svg>
          </Browse>
        </ScrollColumn>
      </WorkArea>

      <Dock $pad="1px 0 2px">
        <Bar>
          <Handle />
          <TextTool>
            <span>
              <u>Σ</u>χεδίαση
            </span>
            <Caret />
          </TextTool>
          <Tools items={['pointer', '|']} />
          <TextTool>
            <span>
              Α<u>υ</u>τόματα Σχήματα
            </span>
            <Caret />
          </TextTool>
          <Tools items={shapeTools} />
          <More />
        </Bar>
        <Bar>
          <Handle />
          <Tools items={pictureTools} />
          <More />
        </Bar>
      </Dock>

      <StatusBar>
        <span>Σελίδα  13</span>
        <span>Ενότητα  1</span>
        <span>13/34</span>
        <span>Στα  17,1εκ.</span>
        <span>Γρ.  23</span>
        <span>Στ.  2</span>
        <Dim>ΕΓΓ</Dim>
        <Dim>ΑΝΑΘ</Dim>
        <Dim>ΕΚΤ</Dim>
        <Dim>ΑΝΤ</Dim>
        <span>Ελληνικά</span>
        <svg width="22" height="14" viewBox="0 0 22 14">
          <path d="M1.500 2l5-1L8 2l1.500-1 5 1v9l-5-.5L8 12l-1.500-1.500-5 .5zM8 2v10M3 4h3M3 6h3M3 8h3M10 4h3" fill="#fff" stroke="#000" />
          <path d="M12 4l7 8M19 4l-7 8" stroke="#a01010" strokeWidth="2.500" />
        </svg>
      </StatusBar>

      <TaskBar>
        <StartButton>
          <svg width="19" height="18" viewBox="0 0 19 18">
            <path d="M3 2c2-1.500 4-1.500 6 0L7.500 8c-2-1.500-4-1.500-6 0z" fill="#f0562b" />
            <path d="M10 2.500c2 1.500 4 1.500 7 0L15.500 8.500c-2.500 1.500-4.500 1.500-7 0z" fill="#8cc63f" />
            <path d="M1 9.500c2-1.500 4-1.500 6 0L5.500 15.500c-2-1.500-4-1.500-6 0z" fill="#4f8ff0" />
            <path d="M8 10c2 1.500 4 1.500 7 0l-1.500 6c-2.500 1.500-4.500 1.500-7 0z" fill="#fbc926" />
          </svg>
          έναρξη
        </StartButton>
        <Task>
          <Icon name="clock" />
          <span>Εισερχόμενα - Micros...</span>
        </Task>
        <Task>
          <Icon name="folderFind" />
          <span>Γ' ΕΙΔΙΚΟΤΗΤΑ ΗΛΕΚ...</span>
        </Task>
        <Task $active>
          <Icon name="word" />
          <span>D-efkoles - Microsoft ...</span>
        </Task>
        <Task>
          <Icon name="word" />
          <span>G- e-m-d - Microsoft ...</span>
        </Task>
        <Language>EN</Language>
        <Tray>
          <TrayToggle aria-label="Show hidden icons">
            <svg width="7" height="9">
              <path d="M5.500 1L2 4.500 5.500 8" fill="none" stroke="#fff" strokeWidth="2" />
            </svg>
          </TrayToggle>
          <Icon name="clock" />
          <Icon name="network" />
          <time>3:54 μμ</time>
        </Tray>
      </TaskBar>
    </Window>
  );
}
